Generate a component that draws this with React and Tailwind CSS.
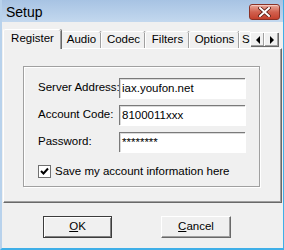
import React from "react";

function CloseButton() {
  return (
    <div className="flex h-[16px] w-[31px] items-center justify-center rounded-[3px] border border-[#8a3328] bg-gradient-to-b from-[#e9a99c] via-[#d1614f] to-[#c4402c] shadow-[inset_0_1px_0_#f4c9c0]">
      <svg width="13" height="10" viewBox="0 0 13 10">
        <path d="M2 1 L11 9 M11 1 L2 9" stroke="#5a1a12" strokeWidth="3.6" strokeLinecap="square" />
        <path d="M2 1 L11 9 M11 1 L2 9" stroke="#ffffff" strokeWidth="2" strokeLinecap="square" />
      </svg>
    </div>
  );
}

function Tab({ label, active, width }) {
  if (active) {
    return (
      <div
        className={`relative z-10 -mb-px flex h-[20px] ${width} items-start justify-center rounded-t-[2px] border-l border-t border-white bg-[#f0f0f0] pt-[3px] shadow-[inset_-1px_0_0_#a0a0a0,1px_0_0_#696969]`}
      >
        {label}
      </div>
    );
  }
  return (
    <div
      className={`flex h-[17px] ${width} items-start justify-center overflow-hidden rounded-t-[2px] border-l border-t border-white bg-[#f0f0f0] pt-[2px] shadow-[inset_-1px_0_0_#a0a0a0,1px_0_0_#696969]`}
    >
      {label}
    </div>
  );
}

function ArrowButton({ dir }) {
  return (
    <div className="flex h-[14px] w-[14px] items-center justify-center border-l border-t border-white bg-[#f0f0f0] shadow-[inset_-1px_-1px_0_#a0a0a0,1px_1px_0_#696969]">
      <svg width="6" height="8" viewBox="0 0 6 8">
        {dir === "left" ? <path d="M5 0 L1 4 L5 8 Z" fill="#000" /> : <path d="M1 0 L5 4 L1 8 Z" fill="#000" />}
      </svg>
    </div>
  );
}

function Field({ label, value }) {
  return (
    <div className="flex h-[20px] items-center">
      <span className="w-[81px] whitespace-nowrap">{label}</span>
      <div className="flex h-[20px] w-[126px] items-center border-l border-t border-[#7a7a7a] bg-white pl-[2px] shadow-[inset_1px_1px_0_#dadada,1px_1px_0_#ffffff]">
        {value}
      </div>
    </div>
  );
}

export default function App() {
  return (
    <div className="flex h-[250px] w-[284px] flex-col border-b-2 border-l-2 border-r border-b-[#3fafe8] border-l-[#b8d2ec] border-r-[#3fafe8] bg-[#b9d1ea] font-['Liberation_Sans',sans-serif] text-[11.5px] leading-none text-black">
      <div className="flex h-[22px] items-start bg-gradient-to-b from-[#a7c3e3] to-[#c3d8ee] pl-[4px] pr-[3px]">
        <span className="flex-1 pt-[5px] text-[14px]">Setup</span>
        <div className="pt-[4px]">
          <CloseButton />
        </div>
      </div>

      <div className="flex flex-1 flex-col bg-[#f0f0f0] pt-[7px]">
        <div className="flex h-[19px] items-end pl-[1px]">
          <Tab label="Register" active width="w-[58px]" />
          <Tab label="Audio" width="w-[40px]" />
          <Tab label="Codec" width="w-[44px]" />
          <Tab label="Filters" width="w-[44px]" />
          <Tab label="Options" width="w-[50px]" />
          <div className="flex h-[17px] w-[11px] items-start overflow-hidden border-l border-t border-white pl-[2px] pt-[2px]">
            S
          </div>
          <div className="mb-[2px] flex">
            <ArrowButton dir="left" />
            <ArrowButton dir="right" />
          </div>
        </div>

        <div className="ml-[1px] h-[155px] w-[279px] border-l border-t border-b border-r border-l-white border-t-white border-b-[#696969] border-r-[#696969] shadow-[inset_-1px_-1px_0_#a0a0a0] pl-[19px] pt-[17px]">
          <div className="flex h-[121px] w-[237px] flex-col border border-[#a0a0a0] pl-[14px] pt-[11px] shadow-[inset_1px_1px_0_#fff,1px_1px_0_#fff]">
            <div className="flex flex-col gap-[7px]">
              <Field label="Server Address:" value="iax.youfon.net" />
              <Field label="Account Code:" value="8100011xxx" />
              <Field label="Password:" value="********" />
            </div>
            <div className="mt-[13px] flex items-center gap-[4px]">
              <div className="flex h-[13px] w-[13px] items-center justify-center border border-[#707070] bg-white">
                <svg width="9" height="9" viewBox="0 0 9 9">
                  <path d="M1 4 L3.5 6.5 L8 1.5" stroke="#000" strokeWidth="2" fill="none" />
                </svg>
              </div>
              <span>Save my account information here</span>
            </div>
          </div>
        </div>

        <div className="flex pl-[41px] pt-[13px]">
          <div className="flex h-[22px] w-[69px] items-center justify-center border border-[#3c3c3c] shadow-[inset_1px_1px_0_#fff,inset_-1px_-1px_0_#808080]">
            <span>
              <span className="underline">O</span>K
            </span>
          </div>
          <div className="ml-[49px] flex h-[22px] w-[70px] items-center justify-center border-l border-t border-b border-r border-l-white border-t-white border-b-[#696969] border-r-[#696969] shadow-[inset_-1px_-1px_0_#a0a0a0]">
            <span>
              <span className="underline">C</span>ancel
            </span>
          </div>
        </div>
      </div>
    </div>
  );
}
